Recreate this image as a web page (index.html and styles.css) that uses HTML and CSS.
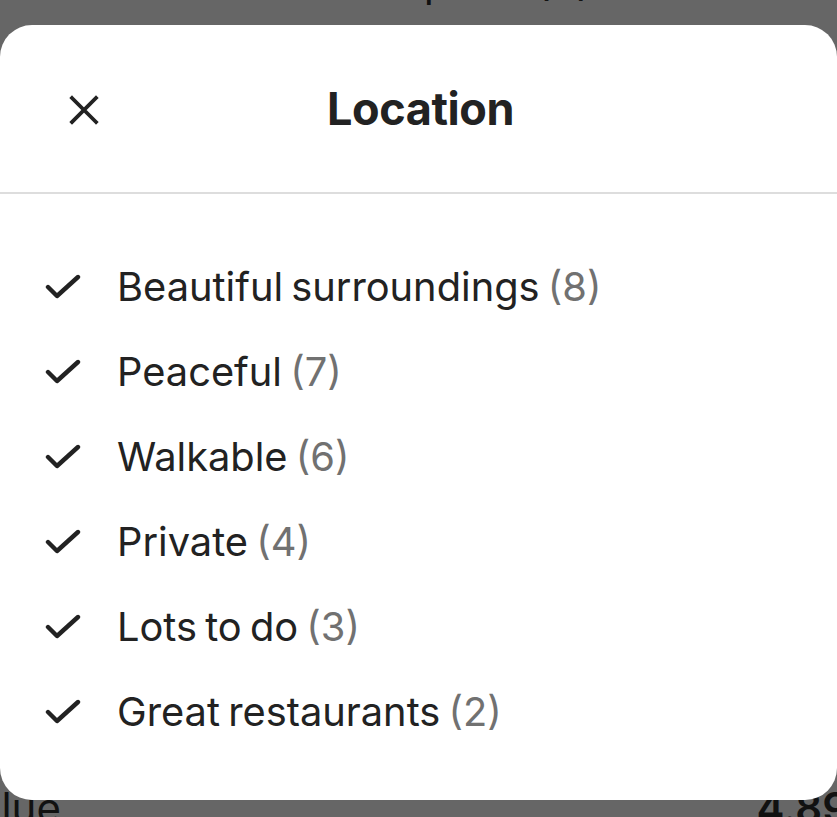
FILE: index.html
```html
<!DOCTYPE html>
<html lang="en">
<head>
    <meta charset="UTF-8">
    <meta name="viewport" content="width=device-width, initial-scale=1.0">
    <title>Location</title>
    <link rel="stylesheet" href="styles.css">
</head>
<body>
    <div class="page">
        <div class="page-row top-row">Accurate description (9)</div>
        <div class="page-row bottom-row">
            <span class="page-label">Value</span>
            <span class="page-score">4.89</span>
        </div>
    </div>

    <div class="sheet">
        <header class="sheet-header">
            <button class="close-btn" aria-label="Close">
                <svg width="32" height="32" viewBox="0 0 32 32" fill="none" stroke="#222" stroke-width="3.8" stroke-linecap="square">
                    <path d="M4 4 L28 28 M28 4 L4 28"/>
                </svg>
            </button>
            <h1>Location</h1>
        </header>
        <ul class="tags">
            <li><svg class="check" viewBox="0 0 36 26" fill="none" stroke="#222" stroke-width="4.4" stroke-linecap="round" stroke-linejoin="round"><path d="M3 13 L12 22 L33 3"/></svg>Beautiful surroundings <span class="count">(8)</span></li>
            <li><svg class="check" viewBox="0 0 36 26" fill="none" stroke="#222" stroke-width="4.4" stroke-linecap="round" stroke-linejoin="round"><path d="M3 13 L12 22 L33 3"/></svg>Peaceful <span class="count">(7)</span></li>
            <li><svg class="check" viewBox="0 0 36 26" fill="none" stroke="#222" stroke-width="4.4" stroke-linecap="round" stroke-linejoin="round"><path d="M3 13 L12 22 L33 3"/></svg>Walkable <span class="count">(6)</span></li>
            <li><svg class="check" viewBox="0 0 36 26" fill="none" stroke="#222" stroke-width="4.4" stroke-linecap="round" stroke-linejoin="round"><path d="M3 13 L12 22 L33 3"/></svg>Private <span class="count">(4)</span></li>
            <li><svg class="check" viewBox="0 0 36 26" fill="none" stroke="#222" stroke-width="4.4" stroke-linecap="round" stroke-linejoin="round"><path d="M3 13 L12 22 L33 3"/></svg>Lots to do <span class="count">(3)</span></li>
            <li><svg class="check" viewBox="0 0 36 26" fill="none" stroke="#222" stroke-width="4.4" stroke-linecap="round" stroke-linejoin="round"><path d="M3 13 L12 22 L33 3"/></svg>Great restaurants <span class="count">(2)</span></li>
        </ul>
    </div>
</body>
</html>
```

FILE: styles.css
```css
html, body {
    height: 100%;
}
body {
    font-family: Inter, "Noto Sans", sans-serif;
    background-color: #666666;
    margin: 0;
    overflow: hidden;
    position: relative;
}
.page {
    height: 100%;
    display: flex;
    flex-direction: column;
    justify-content: space-between;
}
.page-row {
    font-size: 42px;
    color: #111;
    white-space: nowrap;
}
.top-row {
    margin-top: -44px;
    padding-left: 110px;
}
.bottom-row {
    display: flex;
    justify-content: space-between;
    margin-bottom: -16px;
}
.page-label {
    margin-left: -49px;
}
.page-score {
    margin-right: -12px;
    font-weight: 600;
}
.sheet {
    position: absolute;
    top: 25px;
    left: 0;
    right: 0;
    height: 775px;
    background: white;
    border-radius: 32px;
    overflow: hidden;
}
.sheet-header {
    height: 167px;
    border-bottom: 2px solid #dddddd;
    display: flex;
    align-items: center;
    justify-content: center;
    position: relative;
}
.sheet-header h1 {
    margin: 0;
    font-size: 45px;
    font-weight: 700;
    color: #222;
    letter-spacing: -0.4px;
    padding-left: 4px;
}
.close-btn {
    position: absolute;
    left: 68px;
    top: 69px;
    width: 32px;
    height: 32px;
    padding: 0;
    border: none;
    background: none;
    cursor: pointer;
}
.close-btn svg {
    display: block;
}
.tags {
    list-style: none;
    margin: 0;
    padding: 50px 0 0 45px;
}
.tags li {
    display: flex;
    align-items: center;
    height: 85px;
    font-size: 39.8px;
    color: #222;
    white-space: pre;
    word-spacing: -3px;
}
.check {
    width: 36px;
    height: 26px;
    margin-right: 36px;
    flex-shrink: 0;
}
.count {
    color: #717171;
}
```
